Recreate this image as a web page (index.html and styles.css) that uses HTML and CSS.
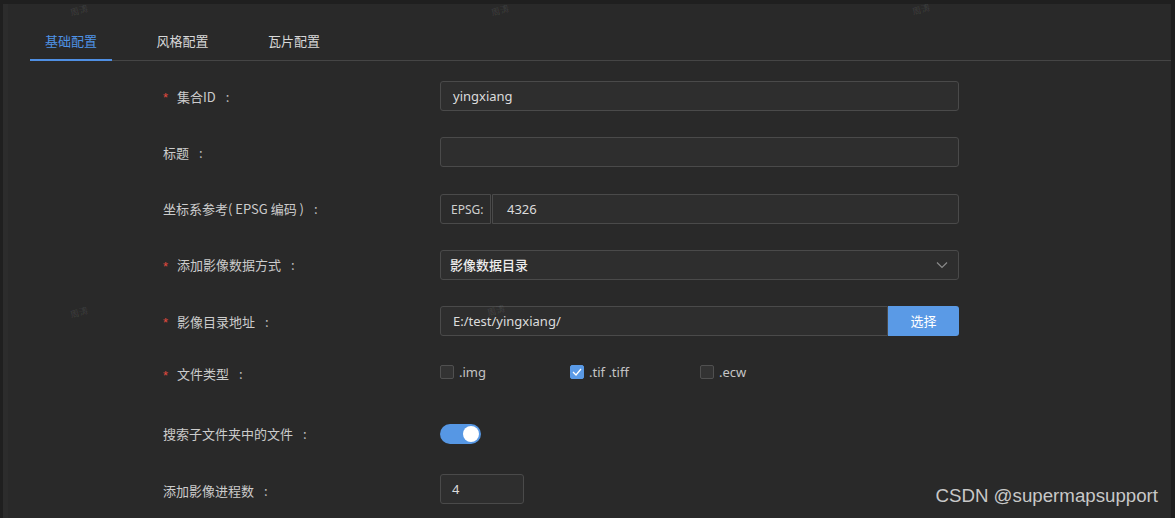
FILE: index.html
```html
<!DOCTYPE html>
<html lang="zh">
<head>
<meta charset="utf-8">
<title>基础配置</title>
<link rel="stylesheet" href="styles.css">
</head>
<body>
<div class="app">
  <div class="panel">
    <div class="tabs">
      <div class="tab active">基础配置</div>
      <div class="tab">风格配置</div>
      <div class="tab">瓦片配置</div>
    </div>
    <div class="form">
      <div class="row">
        <div class="label"><span class="req">*</span>集合ID<span class="colon">:</span></div>
        <div class="control"><div class="input">yingxiang</div></div>
      </div>
      <div class="row">
        <div class="label">标题<span class="colon">:</span></div>
        <div class="control"><div class="input"></div></div>
      </div>
      <div class="row">
        <div class="label">坐标系参考( EPSG 编码 )<span class="colon">:</span></div>
        <div class="control group">
          <div class="addon">EPSG:</div>
          <div class="input grow">4326</div>
        </div>
      </div>
      <div class="row">
        <div class="label"><span class="req">*</span>添加影像数据方式<span class="colon">:</span></div>
        <div class="control">
          <div class="input select">
            <span class="sel-text">影像数据目录</span>
            <svg class="chev" width="12" height="8" viewBox="0 0 12 8"><path d="M1 1.5 L6 6.5 L11 1.5" fill="none" stroke="#8a8a8a" stroke-width="1.2"/></svg>
          </div>
        </div>
      </div>
      <div class="row">
        <div class="label"><span class="req">*</span>影像目录地址<span class="colon">:</span></div>
        <div class="control group">
          <div class="input grow">E:/test/yingxiang/</div>
          <div class="btn">选择</div>
        </div>
      </div>
      <div class="row row-check">
        <div class="label"><span class="req">*</span>文件类型<span class="colon">:</span></div>
        <div class="control checks">
          <label class="check"><span class="box"></span>.img</label>
          <label class="check"><span class="box on"><svg width="10" height="8" viewBox="0 0 10 8"><path d="M1 4 L4 7 L9 1" fill="none" stroke="#fff" stroke-width="1.3"/></svg></span>.tif .tiff</label>
          <label class="check"><span class="box"></span>.ecw</label>
        </div>
      </div>
      <div class="row">
        <div class="label">搜索子文件夹中的文件<span class="colon">:</span></div>
        <div class="control"><span class="switch"><span class="knob"></span></span></div>
      </div>
      <div class="row">
        <div class="label">添加影像进程数<span class="colon">:</span></div>
        <div class="control"><div class="input num">4</div></div>
      </div>
    </div>
  </div>
  <span class="wm w1">周涛</span>
  <span class="wm w2">周涛</span>
  <span class="wm w3">周涛</span>
  <span class="wm w4">周涛</span>
  <span class="wm w5">周涛</span>
  <div class="csdn">CSDN @supermapsupport</div>
</div>
</body>
</html>
```

FILE: styles.css
```css
* { box-sizing: border-box; }
html, body { margin: 0; padding: 0; }
body {
  background: #1f1f1f;
  font-family: "Noto Sans", "Noto Sans CJK SC", sans-serif;
  font-size: 13px;
  color: #cfcfcf;
  width: 1175px;
  height: 518px;
  overflow: hidden;
}
.app {
  position: relative;
  height: 518px;
  padding: 4px 4px 0 3px;
}
.panel {
  height: 514px;
  background: #292929;
  border-left: 5px solid #2c2c2c;
}
.tabs {
  display: flex;
  gap: 29.5px;
  margin-left: 22px;
  border-bottom: 1px solid #454545;
  height: 57px;
}
.tab {
  position: relative;
  padding: 26px 15px 0;
  height: 56px;
  line-height: 22px;
  font-family: "Noto Sans CJK SC", sans-serif;
  font-size: 13px;
  color: #d8d8d8;
}
.tab.active { color: #4f93e6; }
.tab.active::after {
  content: "";
  position: absolute;
  left: 0; right: 0; bottom: -1px;
  height: 2px;
  background: #4f8fe3;
}
.form {
  display: flex;
  flex-direction: column;
  gap: 26.3px;
  padding: 20px 0 0 155px;
}
.row {
  display: flex;
  align-items: center;
  height: 30px;
}
.row-check { align-items: flex-start; padding-top: 3px; }
.row-check .label { margin-top: -1px; }
.label {
  width: 277px;
  flex: none;
  display: flex;
  align-items: center;
  font-family: "Noto Sans CJK SC", sans-serif;
  font-size: 13px;
  color: #cccccc;
  white-space: nowrap;
}
.req {
  color: #e2493f;
  font-family: "Liberation Sans", sans-serif;
  font-size: 13px;
  width: 14px;
  margin-top: 3px;
}
.colon { margin-left: 10px; color: #bdbdbd; }
.control { width: 519px; display: flex; }
.group { gap: 0; }
.input {
  height: 30px;
  width: 100%;
  background: #2e2e2e;
  border: 1px solid #4a4a4a;
  border-radius: 3px;
  padding: 0 12px;
  line-height: 28px;
  color: #dcdcdc;
  font-size: 13px;
}
.grow { flex: 1; width: auto; }
.addon {
  width: 51px;
  flex: none;
  height: 30px;
  border: 1px solid #4a4a4a;
  border-radius: 3px 0 0 3px;
  background: #2b2b2b;
  color: #cfcfcf;
  font-size: 12px;
  line-height: 30px;
  padding-left: 10px;
  margin-right: 1px;
}
.group .addon + .input { border-radius: 0 3px 3px 0; padding-left: 14px; }
.select {
  display: flex;
  align-items: center;
  justify-content: space-between;
  padding: 0 10px 0 9px;
}
.sel-text {
  font-family: "Noto Sans CJK SC", sans-serif;
  color: #ececec;
  font-weight: 500;
}
.chev { margin-top: 1px; }
.group .input.grow:first-child { border-radius: 3px 0 0 3px; }
.btn {
  width: 71px;
  flex: none;
  height: 30px;
  background: #5a9ae6;
  border-radius: 0 3px 3px 0;
  color: #ffffff;
  font-family: "Noto Sans CJK SC", sans-serif;
  font-size: 13px;
  line-height: 30px;
  text-align: center;
}
.checks { gap: 0; }
.check {
  width: 130px;
  display: flex;
  align-items: center;
  color: #c4c4c4;
  font-size: 13px;
  line-height: 14px;
}
.box {
  width: 14px;
  height: 14px;
  border: 1px solid #505050;
  background: #333333;
  border-radius: 2px;
  margin-right: 5px;
  display: flex;
  align-items: center;
  justify-content: center;
}
.box.on { background: #5a9ae6; border-color: #5a9ae6; }
.switch {
  position: relative;
  width: 41px;
  height: 20px;
  border-radius: 10px;
  background: #5697e4;
  display: block;
}
.knob {
  position: absolute;
  right: 2px;
  top: 2px;
  width: 16px;
  height: 16px;
  border-radius: 50%;
  background: #ffffff;
}
.num { width: 84px; padding-left: 11px; margin-top: -3px; }
.wm {
  position: absolute;
  font-family: "Noto Sans CJK SC", sans-serif;
  font-size: 9px;
  font-weight: 700;
  color: rgba(255,255,255,0.07);
  transform: rotate(-16deg);
}
.w1 { left: 70px; top: 4px; }
.w2 { left: 491px; top: 4px; }
.w3 { left: 912px; top: 3px; }
.w4 { left: 70px; top: 306px; }
.w5 { left: 487px; top: 304px; }
.csdn {
  position: absolute;
  right: 17px;
  top: 485px;
  font-family: "Liberation Sans", Arial, sans-serif;
  font-size: 18.7px;
  color: #c8c8c8;
}
```
